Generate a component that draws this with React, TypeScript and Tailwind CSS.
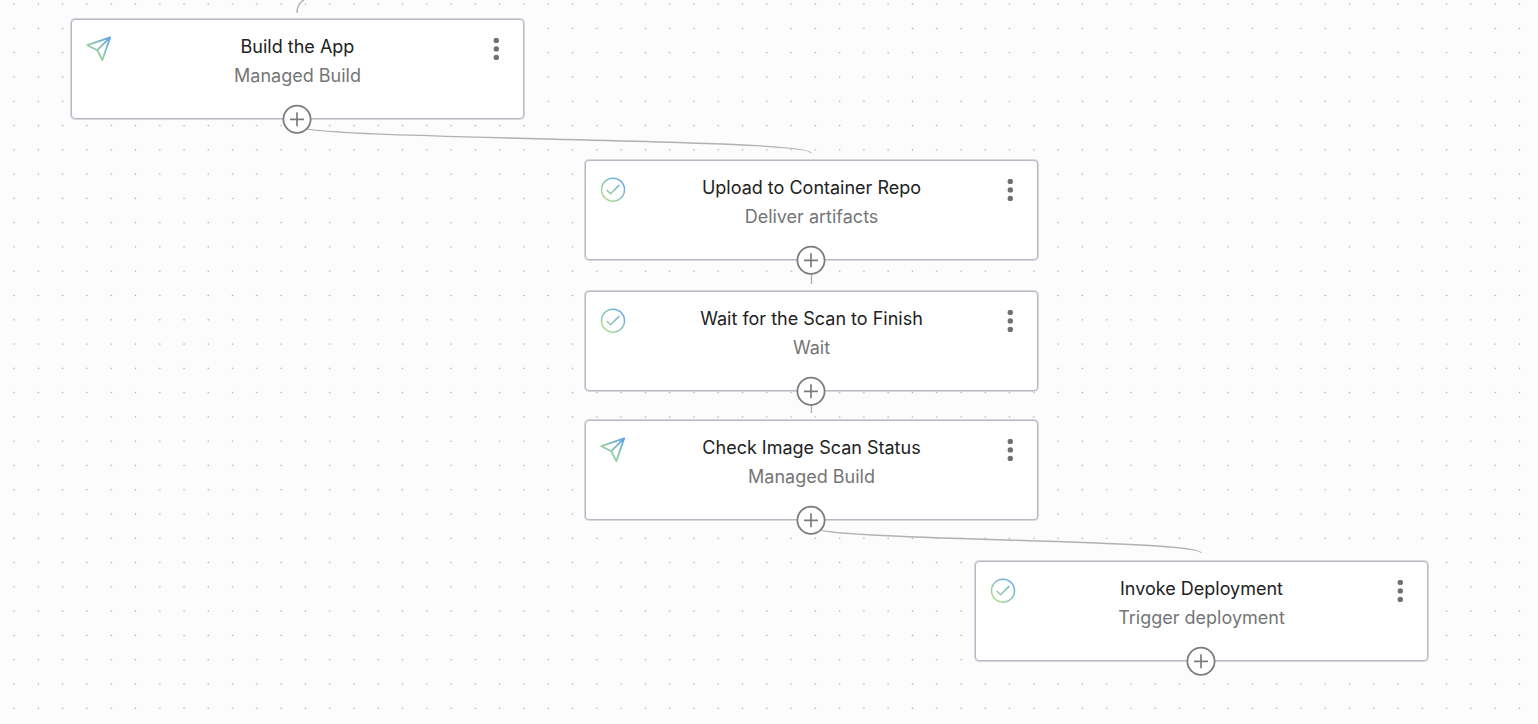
type IconKind = 'plane' | 'check';

interface Step {
  id: string;
  title: string;
  kind: string;
  icon: IconKind;
  x: number;
  y: number;
}

const steps: Step[] = [
  { id: 'build', title: 'Build the App', kind: 'Managed Build', icon: 'plane', x: 71, y: 19 },
  { id: 'upload', title: 'Upload to Container Repo', kind: 'Deliver artifacts', icon: 'check', x: 585, y: 160 },
  { id: 'wait', title: 'Wait for the Scan to Finish', kind: 'Wait', icon: 'check', x: 585, y: 291 },
  { id: 'scan', title: 'Check Image Scan Status', kind: 'Managed Build', icon: 'plane', x: 585, y: 420 },
  { id: 'deploy', title: 'Invoke Deployment', kind: 'Trigger deployment', icon: 'check', x: 975, y: 561 },
];

const edges: string[] = [
  'M297 13C297 7 300 2 305 -1',
  'M297 126C297 140 811 138 811 153',
  'M811.5 268V284',
  'M811.5 398V413',
  'M811 527C811 541 1201 539 1201 553',
];

function PlaneIcon({ id }: { id: string }) {
  return (
    <svg viewBox="0 0 26 26" className="size-[26px]" fill="none" aria-hidden="true">
      <defs>
        <linearGradient id={id} x1="25" y1="1" x2="9" y2="18" gradientUnits="userSpaceOnUse">
          <stop stopColor="#5c9ff0" />
          <stop offset="1" stopColor="#98d29a" />
        </linearGradient>
      </defs>
      <path
        d="M24.2 1.3L1.4 9.2L11.2 14.2L16.3 24.2L24.2 1.3L11.2 14.2"
        stroke={`url(#${id})`}
        strokeWidth="1.8"
        strokeLinejoin="round"
      />
    </svg>
  );
}

function CheckIcon({ id }: { id: string }) {
  return (
    <svg viewBox="0 0 26 26" className="size-[26px]" fill="none" aria-hidden="true">
      <defs>
        <linearGradient id={id} x1="22" y1="4" x2="4" y2="22" gradientUnits="userSpaceOnUse">
          <stop stopColor="#65a8ee" />
          <stop offset="1" stopColor="#a9db82" />
        </linearGradient>
      </defs>
      <circle cx="13" cy="12.7" r="11.5" stroke={`url(#${id})`} strokeWidth="1.5" />
      <path d="M6.7 13L10.6 16.8L19.2 8.1" stroke={`url(#${id})`} strokeWidth="1.5" />
    </svg>
  );
}

function StepCard({ step }: { step: Step }) {
  const gradientId = `icon-${step.id}`;
  return (
    <article
      className="absolute flex h-[100px] w-[453px] items-start justify-between rounded-sm border border-[#b6b9c3] bg-white px-3.5 pt-4 ring-1 ring-[#d6d8de]"
      style={{ left: step.x, top: step.y }}
    >
      <span className="w-8">
        {step.icon === 'plane' ? <PlaneIcon id={gradientId} /> : <CheckIcon id={gradientId} />}
      </span>
      <div className="-mt-1 text-center text-lg/[29px]">
        <h2 className="text-[#222222]">{step.title}</h2>
        <p className="text-[#757575]">{step.kind}</p>
      </div>
      <button type="button" aria-label={`Options for ${step.title}`} className="flex w-8 justify-end pt-0.5 pr-2">
        <svg viewBox="0 0 8 24" className="h-6 w-2" fill="#707070" aria-hidden="true">
          <circle cx="3.3" cy="2.4" r="2.7" />
          <circle cx="3.3" cy="10.9" r="2.7" />
          <circle cx="3.3" cy="19.4" r="2.7" />
        </svg>
      </button>
      <button
        type="button"
        aria-label={`Add a step after ${step.title}`}
        className="absolute -bottom-4 left-1/2 -ml-4"
      >
        <svg viewBox="0 0 30 30" className="size-[30px]" fill="white" stroke="#7c7c7c" aria-hidden="true">
          <circle cx="15" cy="15.3" r="13.6" strokeWidth="1.8" />
          <path d="M8 15.3H22M15 8.3V22.3" strokeWidth="1.7" />
        </svg>
      </button>
    </article>
  );
}

export default function App() {
  return (
    <main className="relative h-screen min-h-[700px] overflow-hidden bg-[#fcfcfc] font-['Inter',sans-serif]">
      <svg className="absolute inset-0 size-full" fill="none" aria-hidden="true">
        <defs>
          <pattern id="grid" x="2" y="-8" width="24.28" height="24.28" patternUnits="userSpaceOnUse">
            <circle cx="12.1" cy="12.1" r="0.8" fill="#a8a8ac" />
          </pattern>
        </defs>
        <rect width="100%" height="100%" fill="url(#grid)" />
        {edges.map((d) => (
          <path key={d} d={d} stroke="#b1b1b5" strokeWidth="1.4" />
        ))}
      </svg>
      {steps.map((step) => (
        <StepCard key={step.id} step={step} />
      ))}
    </main>
  );
}
